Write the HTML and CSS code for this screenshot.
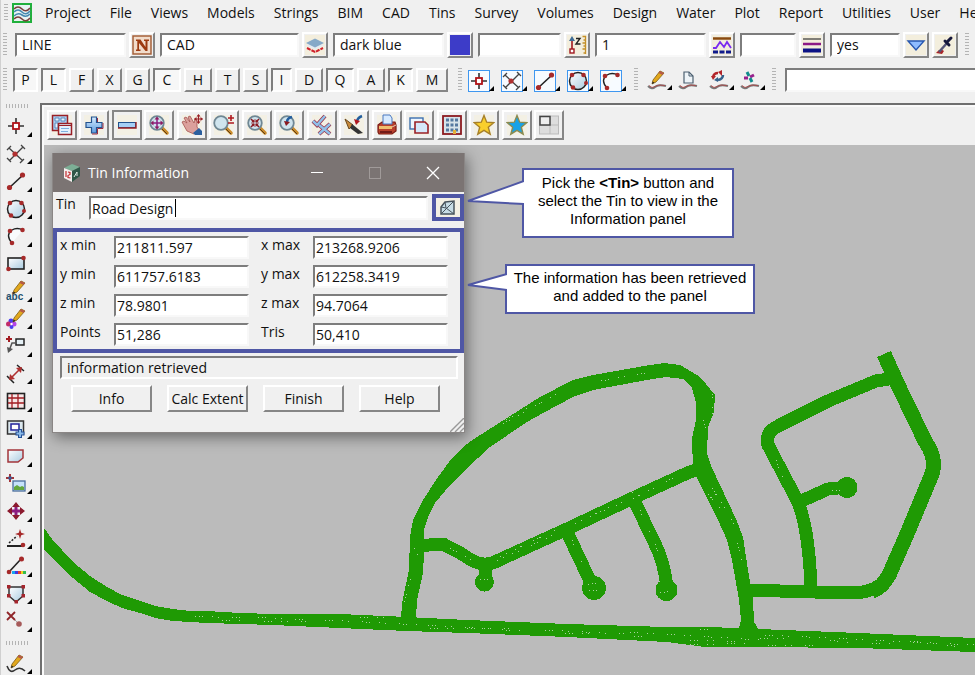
FILE: index.html
```html
<!DOCTYPE html>
<html lang="en">
<head>
<meta charset="utf-8">
<title>Tin Information</title>
<link rel="stylesheet" href="styles.css">
</head>
<body>
<svg class="defs" aria-hidden="true">
  <defs>
    <linearGradient id="sky" x1="0" y1="0" x2="1" y2="1"><stop offset="0" stop-color="#fff"/><stop offset="1" stop-color="#a9cbe0"/></linearGradient>
    <linearGradient id="blue" x1="0" y1="0" x2="0" y2="1"><stop offset="0" stop-color="#d6ecff"/><stop offset="1" stop-color="#5d9be0"/></linearGradient>
  </defs>
  <symbol id="i-more" viewBox="0 0 5 5"><path d="M5 0V5H0Z" fill="#000"/></symbol>
  <symbol id="i-point" viewBox="0 0 20 20"><path d="M10 2v16M2 10h16" stroke="#333" stroke-width="1.6"/><rect x="7" y="7" width="6" height="6" fill="#fff" stroke="#b01218" stroke-width="1.8"/></symbol>
  <symbol id="i-cross" viewBox="0 0 20 20"><path d="M3 4l14 13M3 17L17 3M1 6l4-4M15 1l4 4M1 14l4 4M14 19l4-4" fill="none" stroke="#444" stroke-width="1.3"/><circle cx="9" cy="10" r="2.6" fill="#b03030"/></symbol>
  <symbol id="i-line" viewBox="0 0 20 20"><path d="M3 17L17 4" stroke="#222" stroke-width="1.6"/><circle cx="3.5" cy="16.500" r="2.600" fill="#a62a2a"/><circle cx="16.500" cy="4" r="2.600" fill="#a62a2a"/></symbol>
  <symbol id="i-circle" viewBox="0 0 20 20"><circle cx="10" cy="10" r="8.500" fill="url(#sky)" stroke="#222" stroke-width="1.500"/><g fill="#a62a2a"><circle cx="4" cy="4" r="2.300"/><circle cx="15.500" cy="4" r="2.300"/><circle cx="18" cy="12" r="2"/><circle cx="5" cy="16.500" r="2.300"/></g></symbol>
  <symbol id="i-arc" viewBox="0 0 20 20"><path d="M6 17Q-1 9 6 4Q11 1 17 4Q10 12 6 17" fill="#f8fbfd"/><path d="M6 17Q-1 9 6 4Q11 1 17 4" fill="none" stroke="#222" stroke-width="1.400"/><g fill="#a62a2a"><circle cx="4" cy="5" r="2.300"/><circle cx="16.500" cy="4" r="2.300"/><circle cx="6" cy="17" r="2.300"/></g></symbol>
  <symbol id="i-squiggle" viewBox="0 0 20 20"><path d="M1 16Q5 20 8 17T19 16" fill="none" stroke="#777" stroke-width="2"/><path d="M2 15.500Q5 19 8 16.500T18 15.500" fill="none" stroke="#b54444" stroke-width=".8"/></symbol>
  <symbol id="i-pencil" viewBox="0 0 20 20"><path d="M5 14L6 10L13 1L17 3L9 12Z" fill="#e2a81d" stroke="#7c5b12" stroke-width=".8"/><path d="M13 1L17 3L15.500 5L11.500 3Z" fill="#b55a4a"/><path d="M5 14L5.600 11.500L7.500 12.700Z" fill="#222"/></symbol>
  <symbol id="i-lens" viewBox="0 0 22 22"><path d="M13 13l6 6" stroke="#c98a2b" stroke-width="3.500" stroke-linecap="round"/><path d="M14 15l5 5" stroke="#5b3c17" stroke-width="1"/><circle cx="9" cy="9" r="6.800" fill="#cfe4ee" stroke="#6f8794" stroke-width="1.800"/></symbol>
  <symbol id="i-star" viewBox="0 0 22 22"><path d="M11 1.500L13.700 8.200L20.800 8.700L15.300 13.200L17.200 20.200L11 16.300L4.800 20.200L6.700 13.200L1.200 8.700L8.300 8.200Z" stroke-width="1.400"/></symbol>
</svg>

<div class="app">
  <nav class="menu" aria-label="Main menu">
    <span class="grip"></span>
    <svg class="logo" viewBox="0 0 20 20"><rect x="1" y="1" width="18" height="18" fill="#e8f3f2" stroke="#20b03c" stroke-width="2"/><path d="M2 6Q6 2 10 6T18 5M2 16Q6 12 10 16T18 15" fill="none" stroke="#7a3f3d" stroke-width="1.600"/><path d="M2 9Q6 5 10 9T18 8M2 13Q6 9 10 12T18 11" fill="none" stroke="#4488b0" stroke-width="1.600"/></svg>
    <button>Project</button><button>File</button><button>Views</button><button>Models</button><button>Strings</button><button>BIM</button><button>CAD</button><button>Tins</button><button>Survey</button><button>Volumes</button><button>Design</button><button>Water</button><button>Plot</button><button>Report</button><button>Utilities</button><button>User</button><button>Help</button>
  </nav>

  <div class="props">
    <span class="grip"></span>
    <div class="pair"><input class="field w-m" aria-label="Name" value="LINE"><button class="tool" aria-label="Pick name"><svg viewBox="0 0 20 20"><rect x="1" y="1" width="18" height="18" fill="#f1dccb" stroke="#a5603a" stroke-width="1.500"/><path d="M4 4.500h4.500l5 7.500V6h-1.500V4.500h5V6h-1.500v10h-2L7 8v6.500h1.500V16H4v-1.500h1.300V6H4Z" fill="#9c3a10"/></svg></button></div>
    <div class="pair"><input class="field w-l" aria-label="Model" value="CAD"><button class="tool" aria-label="Pick model"><svg viewBox="0 0 20 20"><rect width="20" height="20" fill="#f3eedd"/><path d="M2 13l8 4 8-4" fill="none" stroke="#d0222b" stroke-width="2" stroke-dasharray="4 1"/><path d="M1 10.500l9-4 9 4-9 4Z" fill="#e3ebf2"/><path d="M1 8l9-4.500L19 8l-9 4.500Z" fill="#86a9c8"/></svg></button></div>
    <div class="pair"><input class="field w-m" aria-label="Colour" value="dark blue"><button class="tool" aria-label="Pick colour"><svg viewBox="0 0 20 20"><rect width="20" height="20" fill="#3d3cc8"/></svg></button></div>
    <div class="pair"><input class="field w-s" aria-label="Height"><button class="tool" aria-label="Pick height"><svg viewBox="0 0 20 20"><rect width="20" height="20" fill="#f3eedd"/><path d="M5 17V4" stroke="#a01820" stroke-width="1.600"/><path d="M2 6l3-5 3 5Z" fill="#3e6c96"/><rect x="3" y="14" width="4" height="4" fill="#fff" stroke="#a01820" stroke-width="1.400"/><path d="M9 3.500h4L9 9h4.500" fill="none" stroke="#222" stroke-width="1.400"/><path d="M18.500 1v18M15.500 1.500H19M16.500 5H19M15.500 8H19M16.500 11H19M15.500 14H19M16.500 18H19" stroke="#c4902a" stroke-width="1.300"/></svg></button></div>
    <div class="pair"><input class="field w-m" aria-label="Linestyle" value="1"><button class="tool" aria-label="Pick linestyle"><svg viewBox="0 0 20 20"><rect width="20" height="20" fill="#f3eedd"/><path d="M1 3.500h18" stroke="#8a4b10" stroke-width="2.500"/><path d="M1 13h3l4-6 4 5 3-5 4 6" fill="none" stroke="#7a2cf0" stroke-width="1.800"/><path d="M1 17h18" stroke="#101b8c" stroke-width="3" stroke-dasharray="5 1.500"/></svg></button></div>
    <div class="pair"><input class="field w-xs" aria-label="Weight"><button class="tool" aria-label="Pick weight"><svg viewBox="0 0 20 20"><rect width="20" height="20" fill="#f3eedd"/><path d="M1 4h18" stroke="#333" stroke-width="1.200"/><path d="M1 9h18" stroke="#8c1a86" stroke-width="2.500"/><path d="M1 15.500h18" stroke="#0c1385" stroke-width="4"/></svg></button></div>
    <div class="pair"><input class="field w-sm" aria-label="Tinable" value="yes"><button class="tool" aria-label="Choose tinable"><svg viewBox="0 0 20 20"><rect width="20" height="20" fill="#f3eedd"/><path d="M2 6h16l-8 9Z" fill="#8fbcff" stroke="#2857b0" stroke-width="1.400"/></svg></button><button class="tool" aria-label="Eyedropper"><svg viewBox="0 0 20 20"><rect width="20" height="20" fill="#f3eedd"/><path d="M1 18Q5 12 9 16L7 19Z" fill="#a8252a"/><path d="M4 17L12 8" stroke="#557" stroke-width="2.500"/><path d="M10 6l4 4M13 6l3-3" stroke="#16183c" stroke-width="3" stroke-linecap="round"/></svg></button></div>
    <span class="grip"></span>
  </div>

  <div class="snaps">
    <span class="grip"></span>
    <div class="letters">
      <button class="key on">P</button><button class="key on">L</button><button class="key">F</button><button class="key">X</button><button class="key">G</button><button class="key wide on">C</button><button class="key wide">H</button><button class="key">T</button><button class="key">S</button><button class="key thin on">I</button><button class="key wide">D</button><button class="key wide on">Q</button><button class="key wide">A</button><button class="key on">K</button><button class="key broad">M</button>
    </div>
    <span class="grip"></span>
    <div class="shapes">
      <button class="flat boxed" aria-label="Point snap"><svg class="ico"><use href="#i-point"/></svg><svg class="more"><use href="#i-more"/></svg></button>
      <button class="flat boxed" aria-label="Intersection snap"><svg class="ico"><use href="#i-cross"/></svg><svg class="more"><use href="#i-more"/></svg></button>
      <button class="flat boxed" aria-label="Line snap"><svg class="ico"><use href="#i-line"/></svg><svg class="more"><use href="#i-more"/></svg></button>
      <button class="flat boxed" aria-label="Circle snap"><svg class="ico"><use href="#i-circle"/></svg><svg class="more"><use href="#i-more"/></svg></button>
      <button class="flat boxed" aria-label="Arc snap"><svg class="ico"><use href="#i-arc"/></svg><svg class="more"><use href="#i-more"/></svg></button>
    </div>
    <span class="grip"></span>
    <div class="edits">
      <button class="flat" aria-label="Edit string"><svg class="ico" viewBox="0 0 20 20"><use href="#i-squiggle"/><use href="#i-pencil"/></svg><svg class="more"><use href="#i-more"/></svg></button>
      <button class="flat" aria-label="Copy string"><svg class="ico" viewBox="0 0 20 20"><use href="#i-squiggle"/><path d="M6 2h5l4 4v7H6Z" fill="#eef4f8" stroke="#4b5f70" stroke-width="1.200"/><path d="M11 2v4h4" fill="none" stroke="#4b5f70"/></svg></button>
      <button class="flat" aria-label="Convert string"><svg class="ico" viewBox="0 0 20 20"><use href="#i-squiggle"/><path d="M4 7Q5 3 9 3" fill="none" stroke="#b3252b" stroke-width="2.500"/><path d="M2 6h5l-3 4Z" fill="#b3252b"/><path d="M14 5Q14 9 9 10" fill="none" stroke="#35628c" stroke-width="2.500"/><path d="M9 2l4-2v6Z" fill="#b3252b"/><path d="M9 7v5l-4-2Z" fill="#35628c"/></svg><svg class="more"><use href="#i-more"/></svg></button>
      <button class="flat" aria-label="Move string"><svg class="ico" viewBox="0 0 20 20"><use href="#i-squiggle"/><g stroke-width="3"><path d="M7 2l2 4" stroke="#0f8c8c"/><path d="M14 5l-4 2" stroke="#98208d"/><path d="M12 12l-2-4" stroke="#0f8c8c"/><path d="M4 8h4" stroke="#98208d"/></g></svg><svg class="more"><use href="#i-more"/></svg></button>
    </div>
    <span class="grip"></span>
    <input class="field prompt" aria-label="Prompt">
  </div>

  <div class="work">
    <aside class="side">
      <span class="grip-h"></span>
      <div class="stack">
        <button class="flat" aria-label="Point"><svg class="ico"><use href="#i-point"/></svg><svg class="more"><use href="#i-more"/></svg></button>
        <button class="flat" aria-label="Intersection"><svg class="ico"><use href="#i-cross"/></svg><svg class="more"><use href="#i-more"/></svg></button>
        <button class="flat" aria-label="Line"><svg class="ico"><use href="#i-line"/></svg><svg class="more"><use href="#i-more"/></svg></button>
        <button class="flat" aria-label="Circle"><svg class="ico"><use href="#i-circle"/></svg><svg class="more"><use href="#i-more"/></svg></button>
        <button class="flat" aria-label="Arc"><svg class="ico"><use href="#i-arc"/></svg><svg class="more"><use href="#i-more"/></svg></button>
        <button class="flat" aria-label="Rectangle"><svg class="ico" viewBox="0 0 20 20"><rect x="2" y="4" width="16" height="11" fill="url(#sky)" stroke="#222" stroke-width="1.600"/><circle cx="17.500" cy="4" r="2.300" fill="#a62a2a"/><circle cx="2.500" cy="15" r="2.300" fill="#a62a2a"/></svg><svg class="more"><use href="#i-more"/></svg></button>
        <button class="flat" aria-label="Text"><svg class="ico" viewBox="0 0 20 20"><text class="abc" x="0" y="19">abc</text><use href="#i-pencil" x="2" y="-1"/></svg><svg class="more"><use href="#i-more"/></svg></button>
        <button class="flat" aria-label="Symbol"><svg class="ico" viewBox="0 0 20 20"><g><circle cx="5" cy="12" r="2.500" fill="#4a3df0"/><circle cx="8" cy="15" r="2.500" fill="#b446e8"/><circle cx="2.500" cy="15" r="2.500" fill="#c22b6a"/><circle cx="5.500" cy="18" r="2" fill="#4a3df0"/><circle cx="5.500" cy="15" r="1.200" fill="#fff"/></g><use href="#i-pencil" x="2" y="-1"/></svg><svg class="more"><use href="#i-more"/></svg></button>
        <button class="flat" aria-label="Leader"><svg class="ico" viewBox="0 0 20 20"><path d="M3 0v6M0 3h6" stroke="#a31c22" stroke-width="2"/><rect x="10" y="3" width="8" height="6" fill="#e5f0f5" stroke="#222" stroke-width="1.500"/><path d="M10 7H6L3 15" fill="none" stroke="#555" stroke-width="1.500"/><path d="M1 11l6 2-5 4Z" fill="#555"/></svg><svg class="more"><use href="#i-more"/></svg></button>
        <button class="flat" aria-label="Dimension"><svg class="ico" viewBox="0 0 20 20"><path d="M1 12l7 7M11 1l7 6" stroke="#222" stroke-width="1.500"/><path d="M5 14L14 5" stroke="#b03030" stroke-width="1.600"/><path d="M3 16l1-6 5 5ZM16 3l-6 1 5 5Z" fill="#b03030"/></svg><svg class="more"><use href="#i-more"/></svg></button>
        <button class="flat" aria-label="Table"><svg class="ico" viewBox="0 0 20 20"><rect x="1.500" y="2.500" width="17" height="15" fill="#f7e7e7" stroke="#222" stroke-width="1.600"/><path d="M2 7h16M2 12h16M6 3v14M12 3v14" stroke="#a31c22" stroke-width="1.300"/></svg><svg class="more"><use href="#i-more"/></svg></button>
        <button class="flat" aria-label="Insert view"><svg class="ico" viewBox="0 0 20 20"><rect x="1.500" y="2" width="16" height="13" fill="#dce8ee" stroke="#333" stroke-width="1.500"/><rect x="5" y="5" width="8" height="6" fill="#fff" stroke="#23239c" stroke-width="1.500"/><path d="M14 10v9M9.500 14.500h9" stroke="#244f95" stroke-width="4"/><path d="M14 11v7M10.500 14.500h7" stroke="#8ab9e8" stroke-width="2"/></svg><svg class="more"><use href="#i-more"/></svg></button>
        <button class="flat" aria-label="Polygon"><svg class="ico" viewBox="0 0 20 20"><path d="M2 4h15v8l-5 4H2Z" fill="url(#sky)" stroke="#a3353a" stroke-width="1.500"/></svg><svg class="more"><use href="#i-more"/></svg></button>
        <button class="flat" aria-label="Image"><svg class="ico" viewBox="0 0 20 20"><path d="M4 0v8M0 4h8" stroke="#a3353a" stroke-width="2"/><rect x="2.500" y="2.500" width="3" height="3" fill="#315b9c"/><rect x="7" y="7" width="12" height="10" fill="#c6e2fa" stroke="#4a6e9c" stroke-width="1.300"/><path d="M8 16v-3l3-2 3 2 2-1 2 1v3Z" fill="#63a83c"/></svg><svg class="more"><use href="#i-more"/></svg></button>
        <button class="flat" aria-label="Move"><svg class="ico" viewBox="0 0 20 20"><path d="M10 3v14M3 10h14" stroke="#8c1c80" stroke-width="3"/><path d="M10 1l4 5H6ZM10 19l4-5H6ZM1 10l5-4v8ZM19 10l-5-4v8Z" fill="#8b1a2d"/></svg><svg class="more"><use href="#i-more"/></svg></button>
        <button class="flat" aria-label="Angle"><svg class="ico" viewBox="0 0 20 20"><path d="M1 17h16" stroke="#222" stroke-width="2"/><path d="M3 14L11 7" stroke="#222" stroke-width="1.500" stroke-dasharray="2 1.500"/><path d="M14 0l1.200 3.800L19 5l-3.800 1.200L14 10l-1.200-3.800L9 5l3.800-1.200Z" fill="#a62a2a"/><circle cx="17" cy="16" r="2.300" fill="#a62a2a"/></svg><svg class="more"><use href="#i-more"/></svg></button>
        <button class="flat" aria-label="Colour line"><svg class="ico" viewBox="0 0 20 20"><path d="M3 16L15 3" stroke="#222" stroke-width="1.600"/><circle cx="3" cy="16" r="2.300" fill="#a62a2a"/><circle cx="15.500" cy="3" r="2.500" fill="#a62a2a"/><path d="M6 16.500h4" stroke="#18a6f0" stroke-width="3"/><path d="M9 16.500h3" stroke="#4538dd" stroke-width="3"/><path d="M12 16.500h3" stroke="#e53c2c" stroke-width="3"/><path d="M15 16.500h2" stroke="#f1d020" stroke-width="3"/><path d="M17 16.500h3" stroke="#30bb50" stroke-width="3"/></svg><svg class="more"><use href="#i-more"/></svg></button>
        <button class="flat" aria-label="Shield polygon"><svg class="ico" viewBox="0 0 20 20"><path d="M3 3h14v9l-7 6-7-6Z" fill="url(#sky)" stroke="#333" stroke-width="1.500"/><g fill="#a3252c"><rect x="1" y="1" width="3.500" height="3.500"/><rect x="15.500" y="1" width="3.500" height="3.500"/><rect x="1" y="10" width="3.500" height="3.500"/><rect x="15.500" y="10" width="3.500" height="3.500"/><rect x="8.500" y="16" width="3.500" height="3.500"/></g></svg><svg class="more"><use href="#i-more"/></svg></button>
        <button class="flat" aria-label="Delete point"><svg class="ico" viewBox="0 0 20 20"><path d="M1 1l8 8M9 1L1 9" stroke="#8f2428" stroke-width="1.800"/><path d="M9 9l4 4" stroke="#777" stroke-dasharray="1 1"/><circle cx="13" cy="13" r="2.800" fill="#a65a5a"/></svg><svg class="more"><use href="#i-more"/></svg></button>
      </div>
      <span class="grip-h"></span>
      <button class="flat" aria-label="Draw"><svg class="ico" viewBox="0 0 20 20"><path d="M1 12Q4 20 9 16T19 17" fill="none" stroke="#333" stroke-width="1.600"/><use href="#i-pencil"/></svg><svg class="more"><use href="#i-more"/></svg></button>
    </aside>

    <main class="view">
      <div class="viewbar">
        <button class="vb" aria-label="View menu"><svg viewBox="0 0 22 22"><rect x="1.500" y="1.500" width="15" height="15" fill="#a9cdf0" stroke="#9a2026" stroke-width="1.500"/><path d="M4 4h4v3H4zM10 4h4v3h-4zM4 9h3v5H4z" fill="#e7f3ff" stroke="#4679b0" stroke-width=".8"/><rect x="7.500" y="9.500" width="13" height="11" fill="#e3f1fd" stroke="#9a2026" stroke-width="1.500"/><path d="M8 11.500h12" stroke="#9a2026"/><path d="M10 14.500h8M10 17.500h7" stroke="#7fb0e0"/></svg></button>
        <button class="vb" aria-label="Add model"><svg viewBox="0 0 22 22"><path d="M8.500 3h5v5.500H19v5h-5.500V19h-5v-5.500H3v-5h5.500Z" fill="url(#blue)" stroke="#23528f" stroke-width="1.200"/><path d="M14.500 4v4M9 20h5.500v-5.500H20V9" fill="none" stroke="#9a2e44"/></svg></button>
        <button class="vb held" aria-label="Remove model"><svg viewBox="0 0 22 22"><rect x="2.500" y="8.500" width="17" height="5" fill="#a5cff5" stroke="#23528f"/><path d="M20 8v6H2" fill="none" stroke="#9a2026" stroke-width="1.400"/></svg></button>
        <button class="vb" aria-label="Fit view"><svg viewBox="0 0 22 22"><use href="#i-lens"/><path d="M9 4v10M4 9h10" stroke="#8c1c80" stroke-width="1.500"/><path d="M9 2.500l2.500 3h-5ZM9 15.500l2.500-3h-5ZM2.500 9l3-2.500v5ZM15.500 9l-3-2.500v5Z" fill="#8c1c60"/></svg></button>
        <button class="vb" aria-label="Pan"><svg viewBox="0 0 22 22"><path d="M1 8l2-1 3 2-3-5 2-1 4 5-2-5 2-1 4 7 1-4 2 1v7l2 3-5 4-7-3Z" fill="#dba09c" stroke="#a45450" stroke-width=".8"/><path d="M12 19l6-5 3 3v4h-7Z" fill="#2c5f9e"/><path d="M17.500 1v8M13.500 5h8" stroke="#9a2026" stroke-width="1.200"/><path d="M17.500 0l2 2.500h-4ZM17.500 10l2-2.500h-4ZM13 5l2.500-2v4ZM22 5l-2.500-2v4Z" fill="#9a2026"/></svg></button>
        <button class="vb" aria-label="Zoom in or out"><svg viewBox="0 0 22 22"><use href="#i-lens" x="-1"/><path d="M18 1v6M15 4h6M15 9h6" stroke="#b01820" stroke-width="1.600"/></svg></button>
        <button class="vb" aria-label="Shrink view"><svg viewBox="0 0 22 22"><use href="#i-lens"/><path d="M5 5l3 3M13 5l-3 3M5 13l3-3M13 13l-3-3" stroke="#8c1a20" stroke-width="1.500"/><path d="M8.500 5v3.500H5ZM9.500 5v3.500H13ZM8.500 13V9.500H5ZM9.500 13V9.500H13Z" fill="#8c1a20"/></svg></button>
        <button class="vb" aria-label="Previous view"><svg viewBox="0 0 22 22"><use href="#i-lens"/><path d="M14 3Q9 4 9 8" fill="none" stroke="#235e9e" stroke-width="2.500"/><path d="M6 7l6 1-4 4Z" fill="#8c1a20"/></svg></button>
        <button class="vb" aria-label="Toggle"><svg viewBox="0 0 22 22"><path d="M2 7l4 4L14 2M8 11l11 9M19 10L8 20" fill="none" stroke="#9a2e44" stroke-width="4"/><path d="M2 7l4 4L14 2M8 11l11 9M19 10L8 20" fill="none" stroke="#8fc0ea" stroke-width="2.500"/></svg></button>
        <button class="vb" aria-label="Redraw"><svg viewBox="0 0 22 22"><path d="M2 5l8 6-4 4Z" fill="#c98a3b" stroke="#6b4a20"/><path d="M9 10l11 9-5 1-8-6Z" fill="#333"/><path d="M14 8Q14 4 19 2" fill="none" stroke="#235e9e" stroke-width="2.500"/><path d="M11 5l6 2-4 4Z" fill="#b01820"/></svg></button>
        <button class="vb" aria-label="Plot"><svg viewBox="0 0 22 22"><path d="M2 11l4-3h13l1 3v6l-4 3H3l-1-2Z" fill="#b8402c" stroke="#7b1c17" stroke-width="1.200"/><path d="M7 1h7l2 3v6H7Z" fill="#d7eaff" stroke="#4a78c0"/><path d="M3 12h13v3H3Z" fill="#f0c070"/><path d="M16 13l4-2" stroke="#e8cbb0"/><path d="M4 18h12" stroke="#5b0f12" stroke-width="1.500"/></svg></button>
        <button class="vb" aria-label="Clone view"><svg viewBox="0 0 22 22"><rect x="2" y="4" width="13" height="11" fill="#eef6fd" stroke="#3c70b0" stroke-width="1.400"/><path d="M7 8h10l3 3v8H7Z" fill="#d5e8fa" stroke="#9a2026" stroke-width="1.600"/></svg></button>
        <button class="vb" aria-label="Building"><svg viewBox="0 0 22 22"><rect x="2" y="2" width="18" height="18" fill="#d7e3e9" stroke="#8c1a20" stroke-width="1.800"/><path d="M5 6h12M5 11h12M5 16h12" stroke="#54789f" stroke-width="3" stroke-dasharray="3 1.500"/><path d="M12 16h3v4h-3z" fill="#e3b038"/></svg></button>
        <button class="vb" aria-label="Favourites"><svg viewBox="0 0 22 22" fill="#f9cf2c" stroke="#a78028"><use href="#i-star"/></svg></button>
        <button class="vb" aria-label="Shared favourites"><svg viewBox="0 0 22 22" fill="#17a2e8" stroke="#8b8a50"><use href="#i-star"/></svg></button>
        <button class="vb plain" aria-label="Layout"><svg viewBox="0 0 22 22"><rect x="1.500" y="2" width="19" height="18" fill="#ddd" stroke="#bbb"/><path d="M12 2v18M1 11h19" stroke="#bbb"/><rect x="2" y="2.500" width="10" height="8.500" fill="#eee" stroke="#444" stroke-width="1.500"/></svg></button>
      </div>

      <div class="canvas">
        <svg class="map" aria-label="Road network">
          <g transform="translate(-44 -145)" shape-rendering="crispEdges">
            <g fill="#1f9a04">
              <path d="M44 528L52 539L73 562L90 576L107 587L122 595L140 601L155 606L173 609L190 611L207 611L240 613L273 614L340 614L407 617L467 620L567 624L667 627L710 627L758 629L858 633L975 638V652L858 648L758 647L725 647L705 647L667 642L567 637L467 633L407 631L340 628L273 625L207 623L173 621L155 618L140 613L122 608L107 601L90 592L73 578L62 568L44 550Z"/>
              <path d="M401 620L402 603L409 570L410 537L413 520L423 500L438 477L452 458L464 446L477 437L507 418L540 397L573 380L593 375L650 365L664 363L680 365L697 375L706 384L715 395L714 412L708 427L707 453L712 468L736 519L743 537L748 570L753 600L754 622L761 633L738 632L741 620L739 600L732 560L727 540L718 520L700 484L693 470L692 438L696 420L696 403L692 388L683 379L666 377L647 380L593 390L573 397L543 413L527 422L490 447L465 470L450 485L435 503L428 517L424 530L424 553L423 573L417 600L416 618L420 625H398Z"/>
              <circle cx="484.500" cy="582" r="9.500"/><circle cx="594" cy="588" r="12"/><circle cx="666.500" cy="590" r="11"/><circle cx="847" cy="487.500" r="10.500"/>
            </g>
            <g fill="none" stroke="#1f9a04" stroke-width="13" stroke-linejoin="round">
              <path d="M415 546L443 544L462 554Q477 565 486 564Q492 564 499 560L567 529L633 498L683 475Q692 470 704 469"/>
              <path d="M485 563V582M566 530L592 585M633 498L656 546Q664 562 667 587"/>
              <path d="M889 379L876 381L828 401L778 426Q765 432 768 445L798 502Q809 530 811 588M797 503L828 489L848 487"/>
              <path stroke-width="15" d="M884 354L897 383L925 441Q937 458 932 474L907 534L889 575Q882 588 872 591"/>
              <path d="M745 590L815 592L850 593Q870 593 880 585"/>
            </g>
            <g class="specks">
              <path d="M195 616L240 618M258 617L310 620M325 620L420 625M428 625L520 631M545 630L625 634M630 632L760 640M765 635L975 645"/>
              <path d="M222 620L240 621M264 621L306 622M360 618L385 617M430 628L510 628M565 633L600 634M634 636L650 637M690 640L740 642M760 638L785 638M830 640L852 643M872 644L890 643M910 641L960 647"/>
              <path d="M690 645L750 643M768 645L820 646M700 629L716 630"/>
              <path d="M503 424L558 393M506 420L535 403M601 381L652 372M712 390L712 415M703 420L707 430M712 488L735 525M708 494L730 520M737 543L742 560M404 602L412 575M414 548L418 556"/>
              <path d="M450 548L475 562M497 561L560 532M500 557L565 525M575 524L612 506M600 512L626 501M633 499L675 477M572 540L586 572M640 510L662 560M632 492L640 496"/>
              <path d="M480 579L489 579M588 585L600 582M589 591L602 590M660 593L673 591M832 490L849 491M776 460L784 480"/>
            </g>
          </g>
        </svg>

        <section class="dialog" aria-label="Tin Information">
          <header class="title">
            <svg class="cube" viewBox="0 0 18 20"><path d="M1 5l8-4 8 3-8 4Z" fill="#7cae95"/><path d="M1 5l8 3v11l-8-4Z" fill="#f4efee"/><path d="M17 4L9 8v11l8-6Z" fill="#2f5748"/><path d="M3 8v6M5 9l2 .5v2L5 12.500v2l2.500.5" fill="none" stroke="#c22a30" stroke-width="1.200"/><path d="M11 14l3-5v4" fill="none" stroke="#dce8e2"/></svg>
            <h1>Tin Information</h1>
            <button class="win" aria-label="Minimise"><svg viewBox="0 0 14 14"><path d="M1 6.500h12" stroke="#fff"/></svg></button>
            <button class="win" aria-label="Maximise" disabled><svg viewBox="0 0 14 14"><rect x="1.500" y="1.500" width="11" height="11" fill="none" stroke="#a09a99"/></svg></button>
            <button class="win" aria-label="Close"><svg viewBox="0 0 14 14"><path d="M1 1l12 12M13 1L1 13" stroke="#fff" stroke-width="1.300"/></svg></button>
          </header>
          <div class="pick">
            <label for="tin">Tin</label>
            <input id="tin" class="cell" value="Road Design">
            <span class="caret"></span>
            <button class="tinbtn" aria-label="Tin"><svg viewBox="0 0 18 16"><path d="M6 2l9-1v13H2V7Z" fill="#c7dde6" stroke="#48545c" stroke-width="1.500"/><path d="M6 2l1 6 8 6M15 1L2 14M2 7l5 1" fill="none" stroke="#48545c"/></svg></button>
          </div>
          <div class="stats">
            <label for="xmin">x min</label><input id="xmin" class="cell" value="211811.597"><label for="xmax">x max</label><input id="xmax" class="cell" value="213268.9206">
            <label for="ymin">y min</label><input id="ymin" class="cell" value="611757.6183"><label for="ymax">y max</label><input id="ymax" class="cell" value="612258.3419">
            <label for="zmin">z min</label><input id="zmin" class="cell" value="78.9801"><label for="zmax">z max</label><input id="zmax" class="cell" value="94.7064">
            <label for="pts">Points</label><input id="pts" class="cell" value="51,286"><label for="tris">Tris</label><input id="tris" class="cell" value="50,410">
          </div>
          <output class="status">information retrieved</output>
          <div class="actions"><button>Info</button><button>Calc Extent</button><button>Finish</button><button>Help</button></div>
          <svg class="resize" viewBox="0 0 14 14"><path d="M0 14L14 0M5 14L14 5M10 14L14 10" stroke="#999" stroke-width="1.400"/></svg>
        </section>

        <div class="note note-a">
          <svg class="tail" viewBox="0 0 58 26"><path d="M58 2L2 22L58 25" fill="#fff" stroke="#4f57a5" stroke-width="2"/></svg>
          Pick the <b>&lt;Tin&gt;</b> button and<br>select the Tin to view in the<br>Information panel
        </div>
        <div class="note note-b">
          <svg class="tail" viewBox="0 0 41 19"><path d="M41 2L2 13L41 18" fill="#fff" stroke="#4f57a5" stroke-width="2"/></svg>
          The information has been retrieved<br>and added to the panel
        </div>
      </div>
    </main>
  </div>
</div>
</body>
</html>
```
FILE: styles.css
```css
* { box-sizing: border-box; }

body {
  margin: 0;
  background: #f0f0f0;
  color: #111;
  font: 14px/20px "Open Sans", "Noto Sans", sans-serif;
  overflow: hidden;
}

button, input { font: inherit; color: inherit; margin: 0; padding: 0; border: 0; background: none; border-radius: 0; }
svg { display: block; flex: none; }
.defs { position: absolute; width: 0; height: 0; }

.app { display: flex; flex-direction: column; height: 100vh; border-left: 1px solid #d0d0d0; }

.grip { flex: none; width: 4px; height: 24px; background: repeating-linear-gradient(#b4b4b4 0 1px, #f0f0f0 1px 3px); }
.grip-h { display: block; width: 24px; height: 4px; margin-left: 5px; background: repeating-linear-gradient(90deg, #b4b4b4 0 1px, #f0f0f0 1px 3px); }

/* Menu */
.menu { display: flex; align-items: center; flex: none; height: 26px; padding-left: 3px; white-space: nowrap; }
.menu .grip { height: 18px; }
.menu .logo { width: 20px; height: 20px; margin: 0 13px 0 4px; }
.menu button { flex: none; margin-right: 19px; }

/* Property row */
.props { display: flex; align-items: center; gap: 5px; flex: none; height: 37px; padding-left: 2px; }
.props .grip:first-child { margin-right: 3px; }
.props .grip:last-child { margin-left: 2px; }
.pair { display: flex; align-items: center; gap: 3px; flex: none; }
.field {
  height: 24px;
  padding: 0 5px;
  background: #fff;
  border: 2px solid;
  border-color: #7d7d7d #f8f8f8 #f8f8f8 #7d7d7d;
}
.w-xs { width: 56px; }
.w-sm { width: 70px; }
.w-s { width: 83px; }
.w-m { width: 111px; }
.w-l { width: 139px; }
.tool {
  display: grid;
  place-items: center;
  width: 26px;
  height: 26px;
  border: 2px solid;
  border-color: #fff #868686 #868686 #fff;
}
.tool svg { width: 20px; height: 20px; }

/* Snap row */
.snaps { display: flex; align-items: center; flex: none; height: 33px; padding-left: 2px; }
.letters { display: flex; gap: 3px; margin: 0 10px 0 6px; }
.key {
  width: 25px;
  height: 24px;
  line-height: 18px;
  border: 2px solid;
  border-color: #fff #868686 #868686 #fff;
}
.key.on { background: #f7f7f7; border-color: #7d7d7d #fff #fff #7d7d7d; }
.key.wide { width: 28px; }
.key.thin { width: 21px; }
.key.broad { width: 32px; }
.flat { position: relative; display: block; flex: none; width: 28px; height: 24px; }
.ico { width: 20px; height: 20px; overflow: visible; }
.more { position: absolute; right: 3px; bottom: 2px; width: 5px; height: 5px; }
.boxed .ico { background: #f7fbff; box-shadow: 0 0 0 1px #3f97f0; }
.shapes { display: flex; gap: 5px; margin: 0 5px 0 7px; padding-top: 2px; }
.edits { display: flex; gap: 3px; margin: 0 4px 0 9px; }
.prompt { flex: 1; min-width: 0; margin-left: 9px; border-right: 0; }

/* Work area */
.work { display: flex; flex: 1; min-height: 0; }
.side { flex: none; width: 39px; padding-top: 8px; overflow: hidden; }
.stack { padding-top: 4px; margin-bottom: 6px; }
.side .flat { width: 26px; height: 28px; margin-left: 5px; }
.side .flat:nth-child(even) { height: 27px; }
.side .more { right: 0; bottom: 3px; }
.side > .flat { margin-top: 5px; }
.abc { font: bold 10px "Liberation Sans", sans-serif; fill: #24506f; }

.view {
  display: flex;
  flex-direction: column;
  flex: 1;
  min-width: 0;
  margin-top: 7px;
  border-top: 2px solid #6f6f6f;
  border-left: 2px solid #6f6f6f;
}
.viewbar { display: flex; flex: none; height: 40px; padding: 3px 0 0 3px; border-top: 2px solid #fafafa; border-left: 2px solid #fafafa; }
.vb {
  display: grid;
  place-items: center;
  flex: none;
  width: 30px;
  height: 30px;
  margin-right: 2px;
  background: #f3f0e4;
  border: 2px solid;
  border-color: #fff #868686 #868686 #fff;
  box-shadow: inset 0 0 0 3px #f0f0f0;
}
.vb:nth-child(even) { margin-right: 3px; }
.vb.held { border-color: #868686; }
.vb.plain { background: #f0f0f0; }
.vb svg { width: 22px; height: 22px; }

.canvas { position: relative; flex: 1; min-height: 0; overflow: hidden; background: #bbb; border-left: 2px solid #fafafa; }
.map { position: absolute; inset: 0; width: 100%; height: 100%; }
.specks { fill: none; stroke: #a9d29f; stroke-width: 1; stroke-dasharray: 1 3 1 2 1 9 1 5 1 13; }

/* Dialog */
.dialog {
  position: absolute;
  left: 8px;
  top: 8px;
  width: 413px;
  background: #f0f0f0;
  border: 1px solid #8a8685;
  border-top: 0;
  padding-bottom: 20px;
  box-shadow: 2px 4px 14px rgba(0, 0, 0, .45);
}
.title { display: flex; align-items: center; height: 39px; padding: 0 2px 0 10px; background: #7b7473; color: #fff; }
.title h1 { flex: 1; margin: 0 0 0 7px; font: inherit; }
.cube { width: 18px; height: 20px; }
.win { display: grid; place-items: center; width: 58px; height: 39px; }
.win svg { width: 14px; height: 14px; }
.pick { position: relative; display: flex; align-items: flex-start; height: 36px; padding: 2px 0 0 3px; }
.pick label { width: 33px; }
.pick .cell { flex: 1; height: 24px; margin: 2px 4px 0 0; }
.caret { position: absolute; left: 122px; top: 7px; width: 1px; height: 18px; background: #000; }
.tinbtn { display: grid; place-items: center; width: 32px; height: 27px; border: 4px solid #4f57a5; background: #f3f0e4; }
.tinbtn svg { width: 18px; height: 16px; }
.cell {
  min-width: 0;
  height: 23px;
  padding: 0 0 0 1px;
  background: #fff;
  border: 2px solid;
  border-color: #7d7d7d #f8f8f8 #f8f8f8 #7d7d7d;
}
.stats {
  display: grid;
  grid-template-columns: 54px 135px 64px 135px;
  row-gap: 6px;
  padding: 4px 3px 3px;
  border: 4px solid #4f57a5;
}
.stats label { line-height: 18px; }
.stats label:nth-of-type(even) { padding-left: 12px; }
.status {
  display: block;
  height: 23px;
  margin: 3px 6px 6px 7px;
  padding-left: 5px;
  line-height: 20px;
  border: 2px solid;
  border-color: #7d7d7d #fff #fff #7d7d7d;
}
.actions { display: flex; gap: 15px; padding-left: 18px; }
.actions button {
  width: 81px;
  height: 27px;
  white-space: nowrap;
  border: 2px solid;
  border-color: #fff #868686 #868686 #fff;
}
.resize { position: absolute; right: 0; bottom: 0; width: 14px; height: 14px; }

/* Callouts */
.note {
  position: absolute;
  background: #fff;
  border: 2px solid #4f57a5;
  color: #000;
  font: 15px/18px "Liberation Sans", sans-serif;
  text-align: center;
  white-space: nowrap;
}
.note-a { left: 478px; top: 23px; width: 212px; height: 70px; padding-top: 4px; }
.note-b { left: 461px; top: 119px; width: 250px; height: 50px; padding-top: 3px; }
.tail { position: absolute; }
.note-a .tail { left: -58px; top: 9px; width: 58px; height: 26px; }
.note-b .tail { left: -41px; top: 6px; width: 41px; height: 19px; }
```
